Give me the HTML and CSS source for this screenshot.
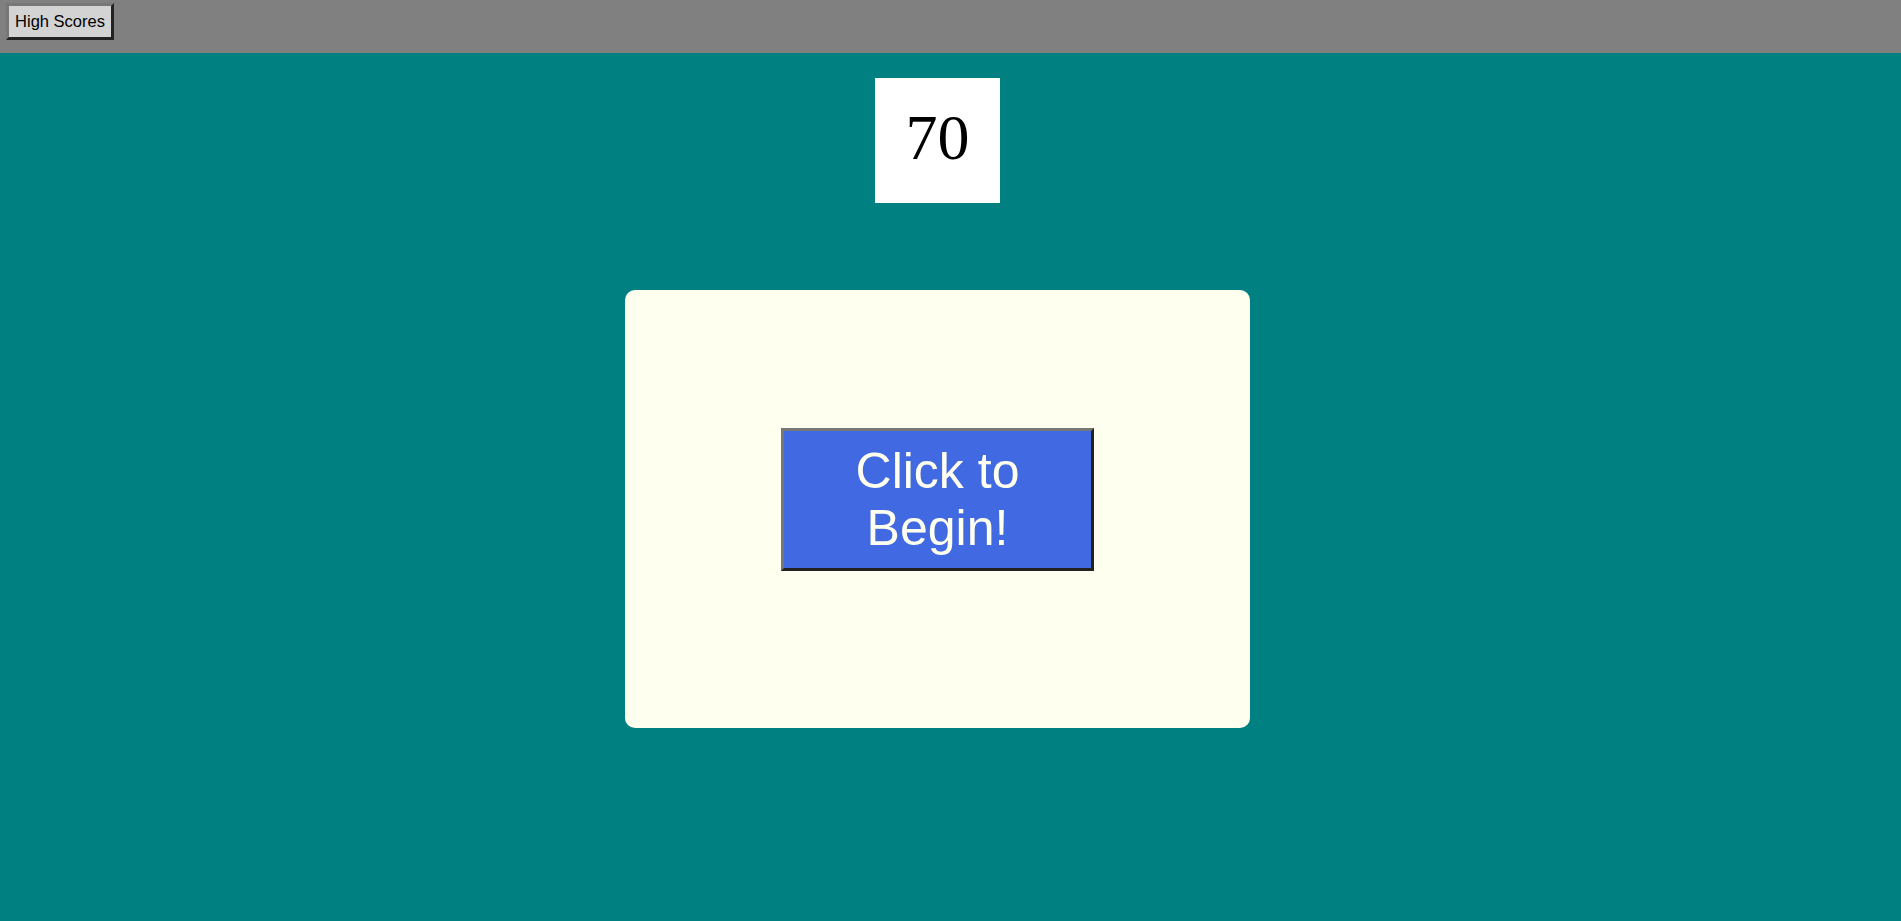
FILE: index.html
```html
<!DOCTYPE html>
<html>
<head>
<meta charset="utf-8">
<link rel="stylesheet" href="styles.css">
</head>
<body>
<header class="topbar">
  <button class="scores-btn">High Scores</button>
</header>
<main class="stage">
  <div class="timer">70</div>
  <div class="card">
    <button class="begin-btn">Click to Begin!</button>
  </div>
</main>
</body>
</html>
```

FILE: styles.css
```css
html, body {
  margin: 0;
  padding: 0;
}
body {
  background: #008080;
  font-family: "Liberation Sans", Arial, sans-serif;
  height: 921px;
  overflow: hidden;
}
.topbar {
  background: #808080;
  height: 53px;
  box-sizing: border-box;
  padding: 3px 0 0 6px;
}
.scores-btn {
  box-sizing: border-box;
  width: 108px;
  height: 37px;
  background: #d3d3d3;
  border: 3px solid;
  border-color: #777 #222 #222 #777;
  font-family: "Liberation Sans", Arial, sans-serif;
  font-size: 16.5px;
  color: #000;
  padding: 0;
}
.stage {
  width: 1875px;
  display: flex;
  flex-direction: column;
  align-items: center;
  padding-top: 25px;
}
.timer {
  box-sizing: border-box;
  width: 125px;
  height: 125px;
  background: #fff;
  font-family: "Liberation Serif", "Times New Roman", serif;
  font-size: 64px;
  color: #000;
  display: flex;
  align-items: center;
  justify-content: center;
  padding-bottom: 6px;
}
.card {
  margin-top: 87px;
  width: 625px;
  height: 438px;
  background: #fffff0;
  border-radius: 10px;
  display: flex;
  justify-content: center;
  padding-top: 138px;
  box-sizing: border-box;
}
.begin-btn {
  box-sizing: border-box;
  width: 313px;
  height: 143px;
  background: #4169e1;
  color: #fffff0;
  border: 3px solid;
  border-color: #777 #222 #222 #777;
  font-family: "Liberation Sans", Arial, sans-serif;
  font-size: 50px;
  line-height: 57px;
  padding: 0 6px;
}
```
